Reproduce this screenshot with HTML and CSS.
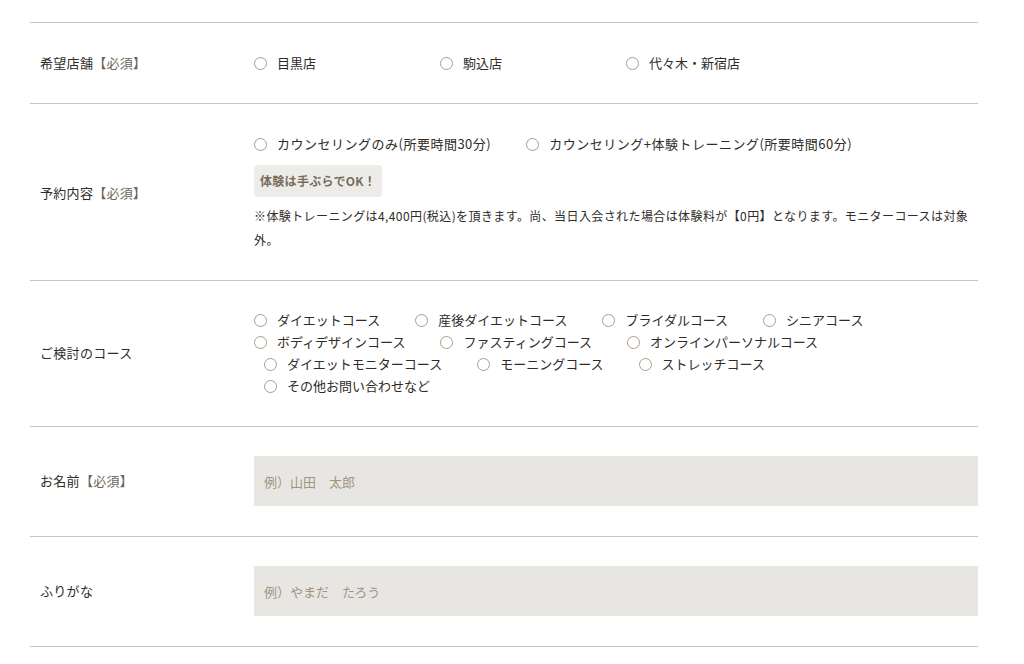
FILE: index.html
```html
<!DOCTYPE html>
<html lang="ja">
  <head>
    <meta charset="UTF-8" />
    <meta name="viewport" content="width=device-width, initial-scale=1.0" />
    <title>ご予約フォーム</title>
    <link rel="stylesheet" href="styles.css">
  </head>

  <body>
    <form class="reserve-form">
      <!-- 店舗 -->
      <div class="form-row">
        <div class="form-label">希望店舗<span class="req">【必須】</span></div>
        <div class="form-field">
          <div class="store-list">
            <label class="radio store"><input type="radio" name="store" /><span>目黒店</span></label>
            <label class="radio store"><input type="radio" name="store" /><span>駒込店</span></label>
            <label class="radio store"><input type="radio" name="store" /><span>代々木・新宿店</span></label>
          </div>
        </div>
      </div>

      <!-- 予約内容 -->
      <div class="form-row row-plan">
        <div class="form-label">予約内容<span class="req">【必須】</span></div>
        <div class="form-field">
          <div class="radio-line plan">
            <label class="radio"><input type="radio" name="plan" /><span>カウンセリングのみ(所要時間30分)</span></label>
            <label class="radio"><input type="radio" name="plan" /><span>カウンセリング+体験トレーニング(所要時間60分)</span></label>
          </div>
          <div class="badge">体験は手ぶらでOK！</div>
          <p class="note">※体験トレーニングは4,400円(税込)を頂きます。尚、当日入会された場合は体験料が【0円】となります。モニターコースは対象外。</p>
        </div>
      </div>

      <!-- コース -->
      <div class="form-row row-course">
        <div class="form-label">ご検討のコース</div>
        <div class="form-field">
          <div class="radio-line">
            <label class="radio"><input type="checkbox" /><span>ダイエットコース</span></label>
            <label class="radio"><input type="checkbox" /><span>産後ダイエットコース</span></label>
            <label class="radio"><input type="checkbox" /><span>ブライダルコース</span></label>
            <label class="radio"><input type="checkbox" /><span>シニアコース</span></label>
          </div>
          <div class="radio-line">
            <label class="radio"><input type="checkbox" /><span>ボディデザインコース</span></label>
            <label class="radio"><input type="checkbox" /><span>ファスティングコース</span></label>
            <label class="radio"><input type="checkbox" /><span>オンラインパーソナルコース</span></label>
          </div>
          <div class="radio-line indent">
            <label class="radio"><input type="checkbox" /><span>ダイエットモニターコース</span></label>
            <label class="radio"><input type="checkbox" /><span>モーニングコース</span></label>
            <label class="radio"><input type="checkbox" /><span>ストレッチコース</span></label>
          </div>
          <div class="radio-line indent">
            <label class="radio"><input type="checkbox" /><span>その他お問い合わせなど</span></label>
          </div>
        </div>
      </div>

      <!-- お名前 -->
      <div class="form-row row-input">
        <div class="form-label">お名前<span class="req">【必須】</span></div>
        <div class="form-field">
          <input class="text-input" type="text" placeholder="例）山田　太郎" />
        </div>
      </div>

      <!-- ふりがな -->
      <div class="form-row row-input">
        <div class="form-label">ふりがな</div>
        <div class="form-field">
          <input class="text-input" type="text" placeholder="例）やまだ　たろう" />
        </div>
      </div>
    </form>
  </body>
</html>
```

FILE: styles.css
```css
body {
  margin: 0;
  padding: 0;
  background: #fff;
  color: #2f2b28;
  font-family: "Noto Sans CJK JP", "Noto Sans", sans-serif;
  font-size: 13px;
}

.reserve-form {
  width: 948px;
  margin: 22px 0 0 30px;
  border-top: 1px solid #cdc6b8;
}

.form-row {
  display: flex;
  align-items: center;
  padding: 30px 0;
  border-bottom: 1px solid #cdc6b8;
}

.row-plan {
  padding-bottom: 28px;
}

.row-course {
  padding: 28px 0 29px;
}

.row-input {
  padding: 29px 0 30px;
}

.form-label {
  width: 214px;
  padding-left: 10px;
  flex-shrink: 0;
  line-height: 20px;
  letter-spacing: 0.3px;
}

.req {
  color: #6e6457;
}

.form-field {
  flex: 1;
}

.store-list {
  display: flex;
}

.radio {
  display: inline-flex;
  align-items: center;
  margin-right: 35px;
  line-height: 20px;
  white-space: nowrap;
}

.store {
  width: 186px;
  margin-right: 0;
}

.radio input {
  -webkit-appearance: none;
  appearance: none;
  width: 13px;
  height: 13px;
  margin: 0 10px 0 0;
  border: 1px solid #a99d88;
  border-radius: 50%;
  background: #fff;
  flex-shrink: 0;
}

.radio-line {
  display: flex;
}

.plan .radio {
  letter-spacing: 0.5px;
}

.row-course .radio {
  line-height: 22px;
}

.indent {
  padding-left: 10px;
}

.badge {
  display: inline-block;
  margin: 11px 0 7px;
  padding: 6px 6px;
  line-height: 20px;
  background: #eeece9;
  border-radius: 4px;
  color: #786d5d;
  font-size: 12px;
  font-weight: bold;
  letter-spacing: 0.3px;
}

.note {
  margin: 0;
  font-size: 12px;
  line-height: 24px;
  letter-spacing: 0.4px;
}

.text-input {
  display: block;
  width: 100%;
  height: 50px;
  box-sizing: border-box;
  padding: 0 10px;
  border: none;
  background: #e8e6e3;
  font-family: inherit;
  font-size: 13px;
  color: #2f2b28;
}

.text-input::placeholder {
  color: #a09580;
}
```
